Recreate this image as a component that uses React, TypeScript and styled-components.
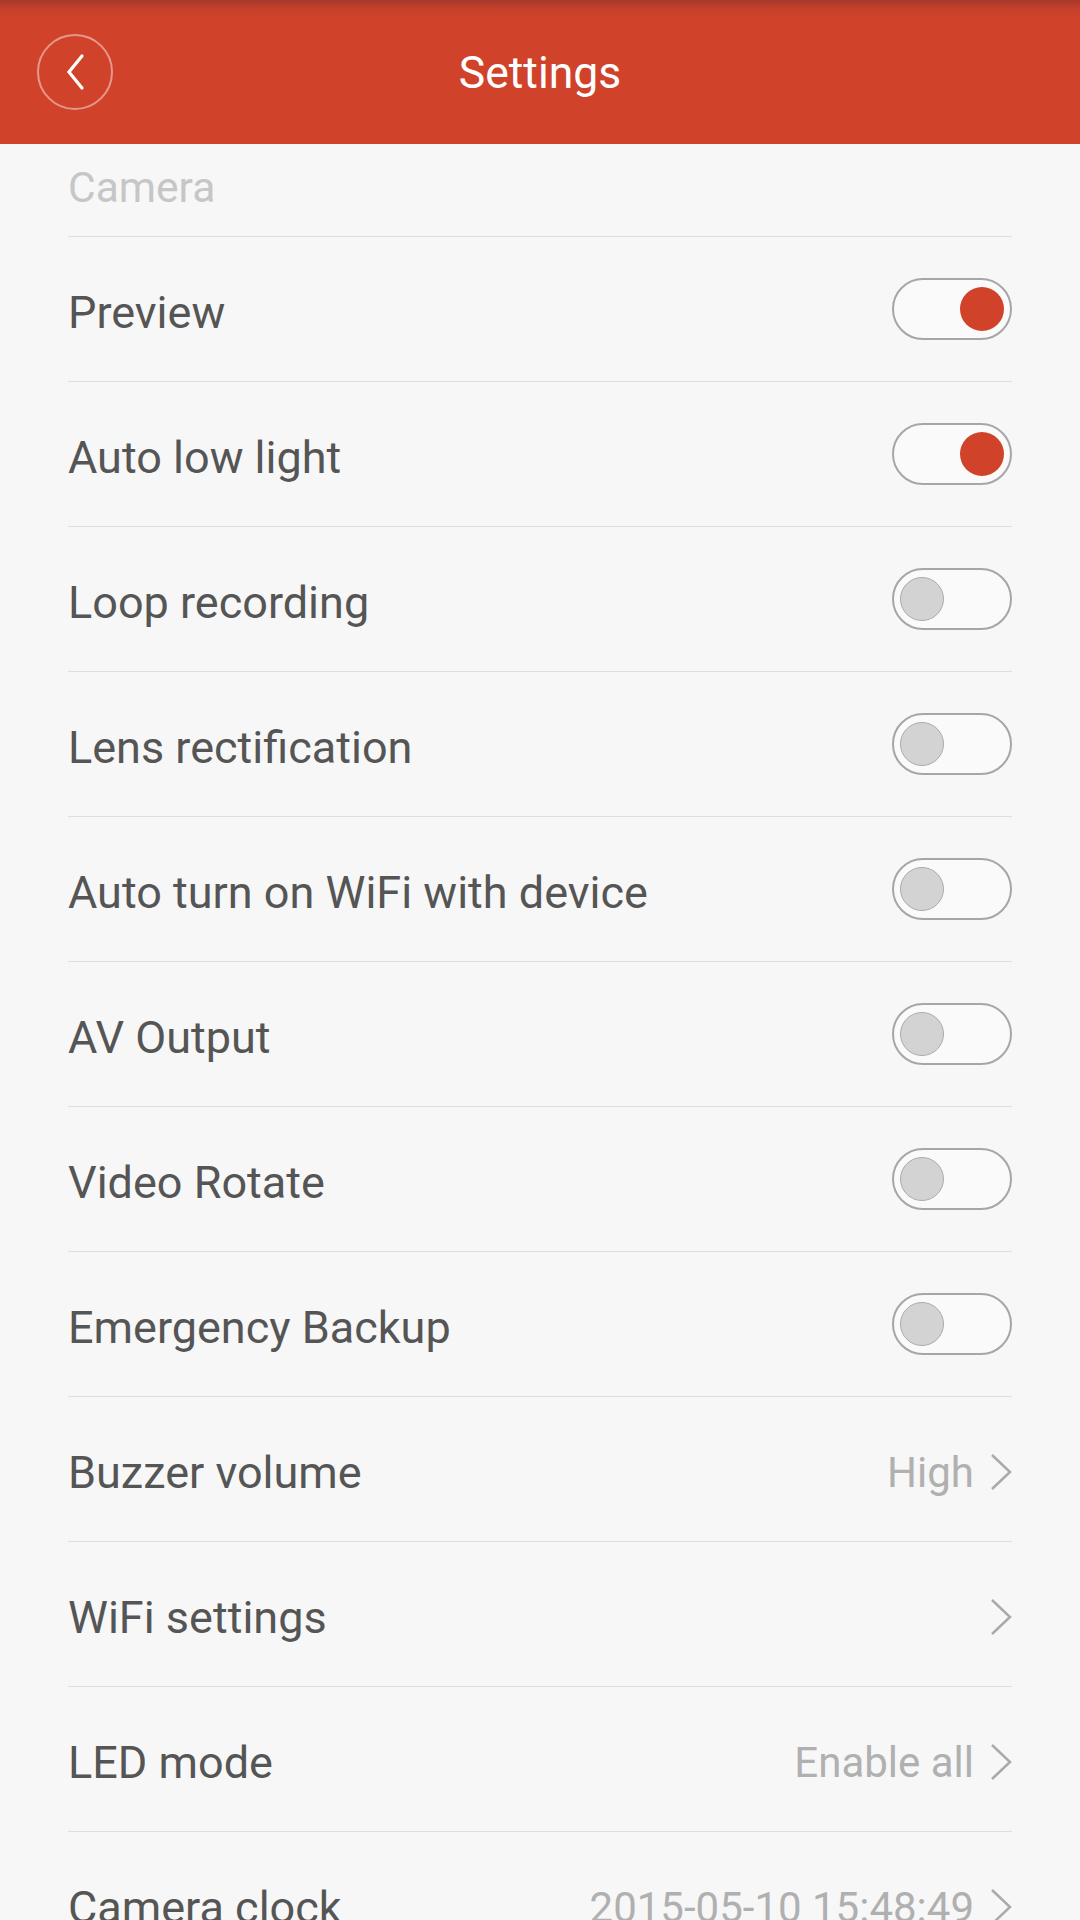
import * as React from 'react'
import styled, { createGlobalStyle } from 'styled-components'

const colors = {
  red: '#d0432a',
  bg: '#f7f7f7',
  text: '#555555',
  muted: '#b0b0b0',
  line: '#dedede',
}

const GlobalStyle = createGlobalStyle`
  html, body {
    margin: 0;
    padding: 0;
    background: ${colors.bg};
    font-family: Roboto, "Noto Sans", sans-serif;
  }
`

const Page = styled.div`
  width: 1080px;
  height: 1920px;
  overflow: hidden;
  background: ${colors.bg};
`

const TopBar = styled.header`
  height: 144px;
  display: grid;
  grid-template-columns: 152px 1fr 152px;
  align-items: center;
  background: linear-gradient(to bottom, #a8372a 0px, #c4412b 8px, ${colors.red} 18px);
`

const BackButton = styled.button`
  justify-self: start;
  margin-left: 37px;
  width: 76px;
  height: 76px;
  border-radius: 50%;
  border: 2px solid rgba(255, 255, 255, 0.45);
  background: transparent;
  display: flex;
  align-items: center;
  justify-content: center;
  padding: 0;
`

const Title = styled.h1`
  margin: 0;
  padding-top: 2px;
  text-align: center;
  color: #fff;
  font-weight: 400;
  font-size: 44.5px;
`

const List = styled.div`
  padding: 0 68px;
`

const SectionLabel = styled.div`
  height: 93px;
  display: flex;
  align-items: center;
  padding-bottom: 6px;
  box-sizing: border-box;
  border-bottom: 1px solid ${colors.line};
  color: #c6c6c6;
  font-size: 42.5px;
`

const Row = styled.div`
  height: 145px;
  box-sizing: border-box;
  border-bottom: 1px solid ${colors.line};
  display: flex;
  align-items: center;
  justify-content: space-between;
`

const Label = styled.span`
  padding-top: 6px;
  color: ${colors.text};
  font-size: 45px;
`

const Toggle = styled.span<{ $on?: boolean }>`
  width: 120px;
  height: 62px;
  box-sizing: border-box;
  border-radius: 31px;
  border: 2px solid #a6a6a6;
  background: #fafafa;
  display: flex;
  align-items: center;
  justify-content: ${p => (p.$on ? 'flex-end' : 'flex-start')};
  padding: 0 6px;
  &::after {
    content: '';
    width: 44px;
    height: 44px;
    box-sizing: border-box;
    border-radius: 50%;
    background: ${p => (p.$on ? colors.red : '#d3d3d3')};
    border: ${p => (p.$on ? 'none' : '1px solid #ababab')};
  }
`

const Value = styled.span`
  padding-top: 6px;
  display: flex;
  align-items: center;
  gap: 16px;
  color: ${colors.muted};
  font-size: 42px;
`

function Chevron() {
  return (
    <svg width="22" height="38" viewBox="0 0 22 38">
      <path d="M2 2 L20 19 L2 36" fill="none" stroke="#aaaaaa" strokeWidth="2.5" />
    </svg>
  )
}

type Item = { label: string; toggle?: boolean; value?: string }

const items: Item[] = [
  { label: 'Preview', toggle: true },
  { label: 'Auto low light', toggle: true },
  { label: 'Loop recording', toggle: false },
  { label: 'Lens rectification', toggle: false },
  { label: 'Auto turn on WiFi with device', toggle: false },
  { label: 'AV Output', toggle: false },
  { label: 'Video Rotate', toggle: false },
  { label: 'Emergency Backup', toggle: false },
  { label: 'Buzzer volume', value: 'High' },
  { label: 'WiFi settings', value: '' },
  { label: 'LED mode', value: 'Enable all' },
  { label: 'Camera clock', value: '2015-05-10 15:48:49' },
]

export default function App() {
  return (
    <Page>
      <GlobalStyle />
      <TopBar>
        <BackButton aria-label="Back">
          <svg width="24" height="38" viewBox="0 0 24 38">
            <path d="M19 3 L6 19 L19 35" fill="none" stroke="#fff" strokeWidth="3.2" strokeLinecap="round" strokeLinejoin="miter" />
          </svg>
        </BackButton>
        <Title>Settings</Title>
        <span />
      </TopBar>
      <List>
        <SectionLabel>Camera</SectionLabel>
        {items.map(item => (
          <Row key={item.label}>
            <Label>{item.label}</Label>
            {item.toggle !== undefined ? (
              <Toggle $on={item.toggle} />
            ) : (
              <Value>
                {item.value ? <span>{item.value}</span> : null}
                <Chevron />
              </Value>
            )}
          </Row>
        ))}
      </List>
    </Page>
  )
}
